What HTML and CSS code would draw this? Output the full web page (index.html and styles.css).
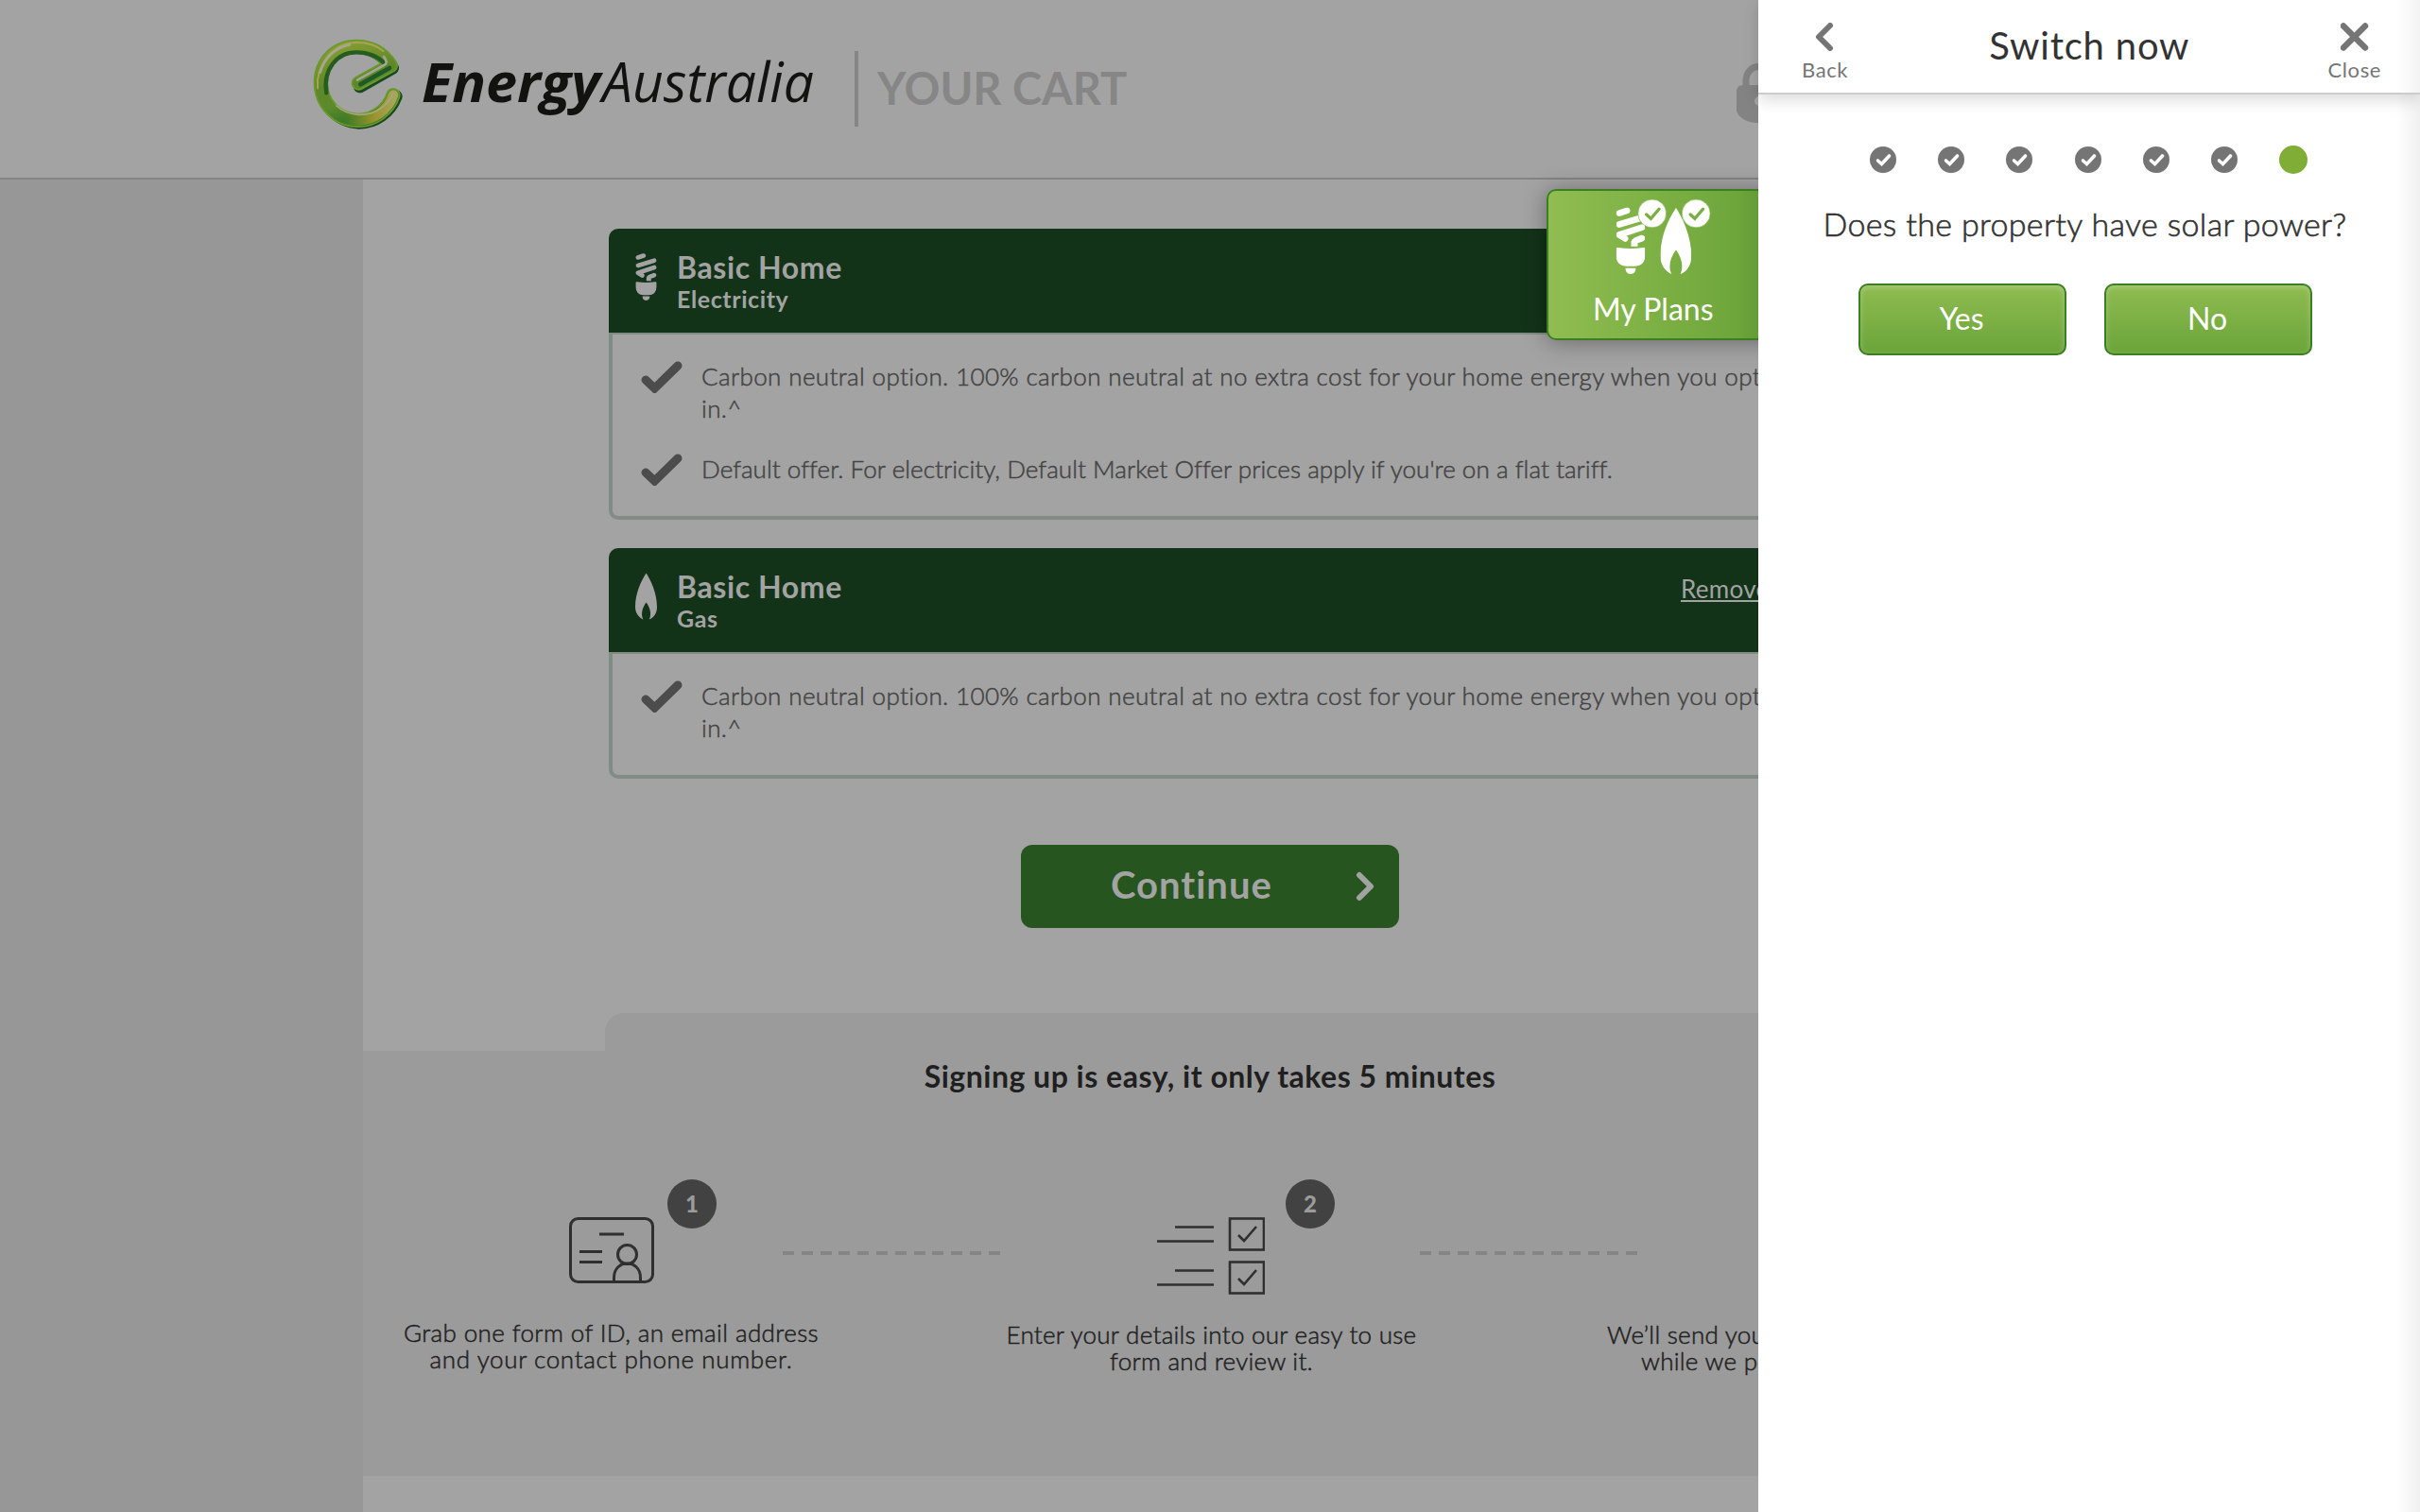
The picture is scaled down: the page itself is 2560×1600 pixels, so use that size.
FILE: index.html
```html
<!DOCTYPE html>
<html lang="en">
<head>
<meta charset="utf-8">
<title>Your cart</title>
<link rel="stylesheet" href="styles.css">
</head>
<body>
<svg class="defs" width="0" height="0">
  <symbol id="bulb" viewBox="207 88 93 213">
    <g fill="none" stroke="currentColor" stroke-width="20" stroke-linecap="round" stroke-linejoin="round">
      <path d="M217 107L242 99"/><path d="M217 143L290 121"/><path d="M290 152L217 176L236 188"/>
    </g>
    <path fill="currentColor" d="M255 213V198Q256 190 266 185L286 177Q298 176 300 186Q300 194 292 197L276 202V213Z"/>
    <path fill="currentColor" d="M207 220Q207 216 212 217Q253 223 295 217Q300 216 300 220V240Q300 276 264 276H243Q207 276 207 240Z"/>
    <path fill="currentColor" d="M237 282H270Q270 300 253 301Q237 300 237 282Z"/>
  </symbol>
  <symbol id="flame" viewBox="348 90 99 211">
    <path fill="currentColor" d="M398 90C420 125 447 180 447 245C447 275 430 295 412 301C422 280 418 250 398 224C378 250 373 280 384 301C366 293 348 272 348 245C348 180 375 125 398 90Z"/>
  </symbol>
  <symbol id="tick" viewBox="0 0 44 34">
    <path d="M5 20L14.500 29L39 5" fill="none" stroke="currentColor" stroke-width="9" stroke-linecap="round"/>
  </symbol>
  <symbol id="done" viewBox="0 0 28 28">
    <circle cx="14" cy="14" r="14" fill="#757575"/>
    <path d="M8.500 15L12.500 18.500L20.500 10" fill="none" stroke="#fff" stroke-width="3.600" stroke-linecap="round"/>
  </symbol>
</svg>

<div class="page">
  <header class="site-header">
    <svg class="logo-mark" viewBox="0 0 360 360">
      <defs>
        <linearGradient id="ring" x1="0" y1="0" x2="0.300" y2="1">
          <stop offset="0" stop-color="#8a9f35"/><stop offset="0.500" stop-color="#5f8728"/><stop offset="0.800" stop-color="#5c8a2b"/><stop offset="1" stop-color="#3f7a25"/>
        </linearGradient>
        <linearGradient id="tail" x1="0" y1="0" x2="1" y2="0">
          <stop offset="0.200" stop-color="#97952d" stop-opacity="0"/><stop offset="0.700" stop-color="#9c952f"/><stop offset="1" stop-color="#a5a45a"/>
        </linearGradient>
      </defs>
      <g fill="none" stroke-linecap="round" stroke-linejoin="round">
        <path d="M296 216C276 268 229 299 180 299C108 294 58 238 60 174C58 105 108 60 172 60C217 60 254 80 285 126L182 184" stroke="#17491f" stroke-width="42"/>
        <path d="M288 212C272 260 225 292 178 292C108 292 58 238 58 172C58 105 108 58 170 58C215 58 252 74 280 118L178 174" stroke="#699a2c" stroke-width="46"/>
        <path d="M288 212C272 260 225 292 178 292C108 292 58 238 58 172C58 105 108 58 170 58C215 58 252 74 280 118L178 174" stroke="url(#ring)" stroke-width="36"/>
        <path d="M288 212C272 260 225 292 178 292C150 292 120 282 100 264" stroke="url(#tail)" stroke-width="32"/>
        <path d="M76 205C64 130 110 76 170 76C210 76 240 88 262 114" stroke="#245d1f" stroke-width="13"/>
        <path d="M184 178L276 126" stroke="#1d5a26" stroke-width="14"/>
        <path d="M174 164L264 114C268 108 264 98 258 90" stroke="#a3a694" stroke-width="8"/>
        <path d="M48 190C42 120 90 52 165 45C205 43 235 54 256 72" stroke="#a9a355" stroke-width="6"/>
        <path d="M56 140C70 92 106 60 150 52" stroke="#a5a88e" stroke-width="8"/>
        <path d="M288 206C272 246 228 276 178 274C150 273 125 262 108 246" stroke="#a7a777" stroke-width="5"/>
      </g>
    </svg>
    <svg class="logo-text" viewBox="0 0 420 90">
      <text x="-1" y="63" font-size="58" font-weight="700" textLength="189" lengthAdjust="spacingAndGlyphs">Energy</text>
      <text x="190" y="63" font-size="58" font-weight="400" textLength="224" lengthAdjust="spacingAndGlyphs">Australia</text>
    </svg>
    <h1 class="cart-title">YOUR CART</h1>
    <svg class="lock" viewBox="0 0 46 64">
      <path d="M10 28V19A13 14.500 0 0 1 36 19V28" fill="none" stroke="#838383" stroke-width="7"/>
      <path fill="#838383" fill-rule="evenodd" d="M7 24H39Q46 24 46 31V52Q40 64 23 64Q6 64 0 52V31Q0 24 7 24ZM24 36A5 5 0 1 0 24 46A5 5 0 1 0 24 36Z"/>
    </svg>
  </header>

  <main class="content">
    <section class="plan">
      <div class="plan-head">
        <svg class="plan-icon"><use href="#bulb"/></svg>
        <div class="plan-name"><h2>Basic Home</h2><p>Electricity</p></div>
      </div>
      <ul class="plan-body">
        <li><svg class="tick"><use href="#tick"/></svg><p>Carbon neutral option. 100% carbon neutral at no extra cost for your home energy when you opt<br>in.^</p></li>
        <li><svg class="tick"><use href="#tick"/></svg><p class="snug">Default offer. For electricity, Default Market Offer prices apply if you're on a flat tariff.</p></li>
      </ul>
    </section>
    <section class="plan">
      <div class="plan-head">
        <svg class="plan-icon"><use href="#flame"/></svg>
        <div class="plan-name"><h2>Basic Home</h2><p>Gas</p></div>
        <a class="remove">Remove</a>
      </div>
      <ul class="plan-body">
        <li><svg class="tick"><use href="#tick"/></svg><p>Carbon neutral option. 100% carbon neutral at no extra cost for your home energy when you opt<br>in.^</p></li>
      </ul>
    </section>
    <button class="continue"><span>Continue</span>
      <svg viewBox="0 0 20 32"><path d="M4 4L16 16L4 28" fill="none" stroke="currentColor" stroke-width="6" stroke-linecap="round" stroke-linejoin="round"/></svg>
    </button>

    <section class="signup">
      <div class="signup-head"><h2>Signing up is easy, it only takes 5 minutes</h2></div>
      <div class="signup-body">
        <div class="visuals">
          <svg class="id-card" viewBox="0 0 90 70" fill="none" stroke="#2f2f2f" stroke-width="3">
            <rect x="1.500" y="1.500" width="87" height="67" rx="8"/>
            <path d="M32 18H58M11 36.500H35M11 47.500H35"/>
            <circle cx="61.500" cy="39.500" r="10"/><path d="M47.500 68V64C47.500 44 75.500 44 75.500 64V68"/>
          </svg>
          <span class="badge">1</span>
          <span class="dashes"></span>
          <svg class="checklist" viewBox="0 0 114 82" fill="none" stroke="#2f2f2f" stroke-width="2.600">
            <path d="M19 10.500H60M0 25.500H60M19 56.500H60M0 71.500H60"/>
            <rect x="77" y="1.500" width="36" height="33"/><rect x="77" y="47.500" width="36" height="33"/>
            <path d="M86 19L92 25L105 10M86 65L92 71L105 56"/>
          </svg>
          <span class="badge">2</span>
          <span class="dashes"></span>
        </div>
        <div class="captions">
          <p>Grab one form of ID, an email address<br><span class="airy">and your contact phone number.</span></p>
          <p class="low">Enter your details into our easy to use<br>form and review it.</p>
          <p class="low last">We’ll send you<br><span>while we p</span></p>
        </div>
      </div>
    </section>
  </main>

  <div class="my-plans">
    <svg viewBox="200 60 312 244">
      <svg x="207" y="88" width="93" height="213"><use href="#bulb"/></svg>
      <svg x="348" y="90" width="99" height="211"><use href="#flame"/></svg>
      <g fill="#fff" stroke="#7fb145" stroke-width="2"><circle cx="322" cy="108" r="45"/><circle cx="462" cy="108" r="45"/></g>
      <path d="M304 111L318 124L344 94M444 111L458 124L484 94" fill="none" stroke="#7aae43" stroke-width="10" stroke-linecap="round"/>
    </svg>
    <span>My Plans</span>
  </div>

  <aside class="panel">
    <header class="panel-head">
      <div class="nav-item back">
        <svg viewBox="0 0 30 30"><path d="M20 3L8 15L20 27" fill="none" stroke="#757575" stroke-width="6" stroke-linecap="round" stroke-linejoin="round"/></svg>
        <span>Back</span>
      </div>
      <h2>Switch now</h2>
      <div class="nav-item close">
        <svg viewBox="0 0 30 30"><path d="M3 3.500L26 26.500M26 3.500L3 26.500" fill="none" stroke="#757575" stroke-width="6.500" stroke-linecap="round"/></svg>
        <span>Close</span>
      </div>
    </header>
    <div class="panel-body">
      <div class="progress">
        <svg><use href="#done"/></svg><svg><use href="#done"/></svg><svg><use href="#done"/></svg><svg><use href="#done"/></svg><svg><use href="#done"/></svg><svg><use href="#done"/></svg><i></i>
      </div>
      <p class="question">Does the property have solar power?</p>
      <div class="answers"><button>Yes</button><button>No</button></div>
    </div>
  </aside>
</div>
</body>
</html>
```
FILE: styles.css
```css
* { box-sizing: border-box; margin: 0; padding: 0; }
body { width: 2560px; height: 1600px; overflow: hidden; font-family: Lato, "Open Sans", sans-serif; font-variant-ligatures: none; }
svg { display: block; flex: none; }
button { border: 0; font: inherit; }

.page { position: relative; height: 1600px; overflow: hidden; background: #979797; }

.site-header { display: flex; align-items: flex-start; height: 190px; padding-left: 320px; background: #a3a3a3; border-bottom: 2px solid #848484; }
.logo-mark { width: 120px; height: 120px; margin-top: 30px; }
.logo-text { width: 420px; height: 90px; margin: 45px 0 0 7px; overflow: visible; font-family: "Open Sans", sans-serif; font-style: italic; fill: #121210; }
.cart-title { margin: 54px 0 0 37px; height: 80px; padding-left: 20px; border-left: 4px solid #868686; font-size: 47px; line-height: 78px; font-weight: 700; color: #868686; white-space: nowrap; }
.lock { position: absolute; left: 1837px; top: 66px; width: 46px; height: 64px; }

.content { width: 1792px; height: 1410px; margin-left: 384px; padding-top: 52px; background: #a3a3a3; }
.plan { width: 1272px; margin: 0 0 30px 260px; border-radius: 10px; border: 4px solid #818c86; border-top: 0; }
.plan-head { display: flex; align-items: flex-start; height: 112px; margin: 0 -4px; padding: 26px 0 0 28px; background: #133319; border-bottom: 2px solid #818c86; border-radius: 10px 10px 0 0; color: #a3a3a3; }
.plan-icon { width: 23px; height: 50px; }
.plan-name { margin: -2px 0 0 21px; width: 180px; white-space: nowrap; }
.plan-name h2 { font-size: 32px; line-height: 34px; font-weight: 700; letter-spacing: .6px; }
.plan-name p { font-size: 25px; line-height: 33px; font-weight: 700; letter-spacing: .6px; }
.remove { margin-left: 882px; font-size: 26px; line-height: 34px; letter-spacing: .3px; text-decoration: underline; }
.plan-body { list-style: none; padding: 28px 0 28px 30px; }
.plan-body li { display: flex; align-items: flex-start; margin-bottom: 30px; }
.plan-body li:last-child { margin-bottom: 4px; }
.tick { width: 44px; height: 34px; color: #4c4c4c; }
.plan-body p { margin: -1px 0 1px 20px; font-size: 26px; line-height: 34px; letter-spacing: .38px; color: #444; font-weight: 300; -webkit-text-stroke: .5px #444; white-space: nowrap; }
.plan-body .snug { letter-spacing: .06px; }

.continue { display: flex; align-items: center; width: 400px; height: 88px; margin: 70px 0 90px 696px; padding-left: 95px; border-radius: 12px; background: #26551f; color: #a3a3a3; font-size: 40px; font-weight: 700; letter-spacing: 1px; }
.continue span { padding-bottom: 4px; }
.continue svg { width: 20px; height: 32px; margin-left: auto; margin-right: 26px; }

.signup { color: #1f1f1f; }
.signup-head { width: 1280px; height: 40px; margin-left: 256px; background: #9b9b9b; border-radius: 20px 20px 0 0; text-align: center; }
.signup-head h2 { padding-top: 46px; font-size: 32px; line-height: 42px; font-weight: 700; letter-spacing: .5px; }
.signup-body { height: 450px; padding-top: 136px; background: #9b9b9b; }
.visuals { display: flex; align-items: flex-start; padding-left: 218px; }
.id-card { width: 90px; height: 70px; margin-top: 40px; }
.badge { width: 52px; height: 52px; margin-left: 14px; border-radius: 50%; background: #424242; color: #9b9b9b; text-align: center; font-size: 24px; line-height: 52px; font-weight: 900; }
.dashes { width: 230px; height: 4px; margin: 76px 1px 0 70px; background: repeating-linear-gradient(90deg, #858585 0 12px, transparent 12px 19.8px); }
.checklist { width: 114px; height: 82px; margin: 40px 0 0 165px; }
.checklist + .badge { margin-left: 22px; }
.checklist ~ .dashes { margin-left: 90px; }
.captions { display: flex; margin-top: 26px; font-size: 26px; line-height: 28px; letter-spacing: .3px; font-weight: 300; -webkit-text-stroke: .5px #1f1f1f; text-align: center; white-space: nowrap; }
.captions p { flex: none; width: 635px; margin-left: -55px; letter-spacing: .4px; }
.captions .airy { letter-spacing: .63px; }
.captions .low { margin: 2px 0 0; letter-spacing: .28px; }
.captions .last { text-align: left; padding-left: 101px; }
.captions .last span { padding-left: 36px; }

.my-plans { position: absolute; left: 1636px; top: 200px; width: 260px; height: 160px; border: 2px solid #3c7f22; border-radius: 10px; background: linear-gradient(90deg, #90bd51 0, #6ea63b 200px, #649b36 222px); box-shadow: 0 2px 24px rgba(0, 0, 0, .35); color: #fff; font-size: 32px; line-height: 40px; }
.my-plans svg { color: #fff; }
.my-plans > svg { width: 104px; height: 81px; margin: 8px 0 0 69px; }
.my-plans span { display: inline-block; margin: 16px 0 0 47px; white-space: nowrap; }

.panel { position: absolute; left: 1860px; top: 0; width: 700px; height: 1600px; background: linear-gradient(90deg, #fff 675px, #f0f0f0 700px); color: #333; }
.panel-head { position: relative; display: flex; justify-content: space-between; height: 100px; padding: 24px 41px 0 46px; background: linear-gradient(90deg, #fff 675px, #f3f3f3 700px); border-bottom: 2px solid #ccc; box-shadow: 0 6px 16px rgba(0, 0, 0, .14); }
.panel-head h2 { padding-left: 3px; font-size: 40px; line-height: 48px; font-weight: 400; letter-spacing: .8px; }
.nav-item { display: flex; flex-direction: column; align-items: center; font-size: 22px; line-height: 28px; letter-spacing: .6px; color: #757575; }
.nav-item svg { width: 30px; height: 30px; margin-bottom: 6px; }
.panel-body { padding-top: 54px; }
.progress { display: flex; align-items: center; gap: 44.200px; height: 30px; margin-left: 118px; }
.progress svg { width: 28px; height: 28px; }
.progress i { width: 30px; height: 30px; border-radius: 50%; background: #7fad35; }
.question { margin: 33px 9px 0 0; text-align: center; font-size: 34px; line-height: 40px; font-weight: 300; -webkit-text-stroke: .6px #333; letter-spacing: .35px; white-space: nowrap; }
.answers { display: flex; gap: 40px; margin: 43px 0 0 106px; }
.answers button { width: 220px; height: 76px; padding: 0 2px 3px 0; border: 2px solid #3c7f22; border-radius: 10px; background: linear-gradient(#8fbc50, #6ba43a); box-shadow: inset 0 2px 6px rgba(255, 255, 255, .25); color: #fff; font-size: 32px; }
```
